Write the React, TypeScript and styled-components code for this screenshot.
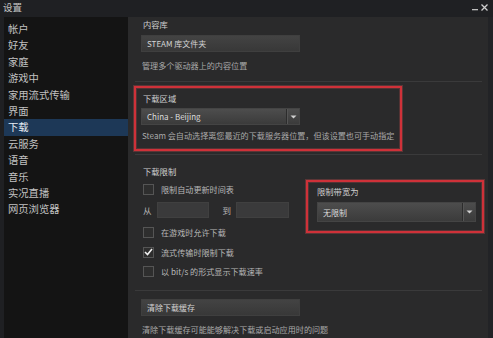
import styled, { createGlobalStyle } from "styled-components";

const GlobalStyle = createGlobalStyle`
  html, body {
    margin: 0;
    padding: 0;
    background: #1f2023;
  }
  * {
    box-sizing: border-box;
  }
`;

const Window = styled.div`
  width: 493px;
  height: 338px;
  background: #1f2023;
  font-family: "Noto Sans CJK SC", "Noto Sans", sans-serif;
  display: flex;
  flex-direction: column;
  overflow: hidden;
`;

const TitleBar = styled.div`
  height: 17px;
  display: flex;
  justify-content: space-between;
  align-items: flex-start;
  padding: 0 5px 0 3px;
  color: #c4c4c4;
  font-size: 9.5px;
  line-height: 14px;
`;

const WinControls = styled.div`
  display: flex;
  gap: 3px;
  align-items: center;
  height: 12px;
  margin-top: 1px;
`;

const Body = styled.div`
  flex: 1;
  display: flex;
  padding-left: 4px;
  min-height: 0;
`;

const Sidebar = styled.div`
  width: 124px;
  background: #141414;
  padding-top: 4px;
`;

const NavItem = styled.div<{ $active?: boolean }>`
  height: 16.4px;
  line-height: 16.4px;
  padding-left: 4px;
  font-size: 10.3px;
  color: ${({ $active }) => ($active ? "#e8eef4" : "#c2c2c2")};
  background: ${({ $active }) => ($active ? "#1d3857" : "transparent")};
`;

const Content = styled.div`
  flex: 1;
  background: #2a2a2b;
  padding: 1px 0 0 13px;
  display: flex;
  flex-direction: column;
  align-items: flex-start;
  border-right: 5px solid #222326;
`;

const Heading = styled.div`
  font-size: 8.3px;
  line-height: 12px;
  color: #cfcfcf;
  padding-left: 2px;
`;

const Desc = styled.div<{ $mt?: number }>`
  font-size: 8.1px;
  line-height: 12px;
  color: #a9a9a9;
  margin-top: ${({ $mt }) => $mt ?? 0}px;
  padding-left: 1px;
  white-space: nowrap;
`;

const Button = styled.div<{ $mt?: number }>`
  width: 159px;
  height: 17px;
  margin-top: ${({ $mt }) => $mt ?? 0}px;
  background: linear-gradient(#434343, #383838);
  border: 1px solid #3f3f3f;
  color: #d4d4d4;
  font-size: 8px;
  line-height: 15px;
  padding-left: 5px;
`;

const Separator = styled.div<{ $mt?: number }>`
  align-self: stretch;
  height: 1px;
  background: #3a3a3b;
  margin: ${({ $mt }) => $mt ?? 0}px 6px 0 -6px;
`;

const RedBox = styled.div<{ $mt?: number }>`
  border: 2px solid #cf3139;
  box-shadow: 0 0 0 1px rgba(210, 80, 80, 0.3), inset 0 0 0 1px rgba(210, 80, 80, 0.25);
  margin-top: ${({ $mt }) => $mt ?? 0}px;
  display: flex;
  flex-direction: column;
  align-items: flex-start;
`;

const RegionBox = styled(RedBox)`
  width: 268px;
  height: 65px;
  margin-left: -7px;
  padding: 4px 0 0 5px;
`;

const BandwidthBox = styled(RedBox)`
  width: 178px;
  height: 53px;
  padding: 3px 6px 0 9px;
`;

const Dropdown = styled.div<{ $w: number; $h: number; $mt: number }>`
  width: ${({ $w }) => $w}px;
  height: ${({ $h }) => $h}px;
  margin-top: ${({ $mt }) => $mt}px;
  background: linear-gradient(#4d4d4d, #3b3b3b);
  border: 1px solid #444;
  display: flex;
  align-items: stretch;
  color: #dcdcdc;
  font-size: 8px;
`;

const DropLabel = styled.div`
  flex: 1;
  display: flex;
  align-items: center;
  padding-left: 5px;
`;

const DropArrow = styled.div`
  width: 13px;
  border-left: 1px solid #2c2c2c;
  box-shadow: inset 1px 0 0 #555;
  display: flex;
  align-items: center;
  justify-content: center;
`;

const LimitRow = styled.div`
  display: flex;
  align-items: flex-start;
  margin-top: 3px;
`;

const LimitColumn = styled.div`
  width: 165px;
  display: flex;
  flex-direction: column;
  padding-top: 3px;
`;

const CheckRow = styled.div<{ $mt: number }>`
  display: flex;
  align-items: center;
  height: 12px;
  margin-top: ${({ $mt }) => $mt}px;
  padding-left: 2px;
  gap: 7px;
  font-size: 8.1px;
  color: #b8b8b8;
  white-space: nowrap;
`;

const Box = styled.div`
  width: 11px;
  height: 11px;
  border: 1px solid #555;
  background: #2e2e2e;
  display: flex;
  align-items: center;
  justify-content: center;
`;

const TimeRow = styled.div`
  display: flex;
  align-items: center;
  margin-top: 7px;
  height: 16px;
  padding-left: 2px;
  font-size: 8.5px;
  color: #b8b8b8;
`;

const TimeInput = styled.div<{ $ml: number; $w: number }>`
  width: ${({ $w }) => $w}px;
  height: 16px;
  margin-left: ${({ $ml }) => $ml}px;
  background: #3a3a3b;
  border: 1px solid #404040;
`;

const Arrow = () => (
  <svg width="7" height="4" viewBox="0 0 7 4">
    <path d="M0.5 0.5 L6.5 0.5 L3.5 3.5 Z" fill="#d0d0d0" />
  </svg>
);

const Check = ({ on }: { on?: boolean }) => (
  <Box>
    {on && (
      <svg width="9" height="8" viewBox="0 0 9 8">
        <path d="M1 4 L3.5 6.5 L8 1" stroke="#f0f0f0" strokeWidth="1.6" fill="none" />
      </svg>
    )}
  </Box>
);

const navItems = ["帐户", "好友", "家庭", "游戏中", "家用流式传输", "界面", "下载", "云服务", "语音", "音乐", "实况直播", "网页浏览器"];

export default function App() {
  return (
    <Window>
      <GlobalStyle />
      <TitleBar>
        <span>设置</span>
        <WinControls>
          <svg width="6" height="8" viewBox="0 0 6 8">
            <rect x="0" y="6" width="6" height="1.3" fill="#bdbdbd" />
          </svg>
          <svg width="7" height="7" viewBox="0 0 7 7">
            <path d="M0.5 0.5 L6.5 6.5 M6.5 0.5 L0.5 6.5" stroke="#cfcfcf" strokeWidth="1.3" />
          </svg>
        </WinControls>
      </TitleBar>
      <Body>
        <Sidebar>
          {navItems.map((n) => (
            <NavItem key={n} $active={n === "下载"}>
              {n}
            </NavItem>
          ))}
        </Sidebar>
        <Content>
          <Heading>内容库</Heading>
          <Button $mt={5}>STEAM 库文件夹</Button>
          <Desc $mt={8}>管理多个驱动器上的内容位置</Desc>
          <Separator $mt={9} />
          <RegionBox $mt={4}>
            <Heading>下载区域</Heading>
            <Dropdown $w={159} $h={17} $mt={4}>
              <DropLabel>China - Beijing</DropLabel>
              <DropArrow>
                <Arrow />
              </DropArrow>
            </Dropdown>
            <Desc $mt={5}>Steam 会自动选择离您最近的下载服务器位置，但该设置也可手动指定</Desc>
          </RegionBox>
          <Separator $mt={3} />
          <Heading style={{ marginTop: 10 }}>下载限制</Heading>
          <LimitRow>
            <LimitColumn>
              <CheckRow $mt={0}>
                <Check />
                限制自动更新时间表
              </CheckRow>
              <TimeRow>
                从
                <TimeInput $ml={5} $w={52} />
                <span style={{ marginLeft: 14 }}>到</span>
                <TimeInput $ml={5} $w={53} />
              </TimeRow>
              <CheckRow $mt={8}>
                <Check />
                在游戏时允许下载
              </CheckRow>
              <CheckRow $mt={8}>
                <Check on />
                流式传输时限制下载
              </CheckRow>
              <CheckRow $mt={7}>
                <Check />
                以 bit/s 的形式显示下载速率
              </CheckRow>
            </LimitColumn>
            <BandwidthBox>
              <Heading style={{ paddingLeft: 0 }}>限制带宽为</Heading>
              <Dropdown $w={159} $h={20} $mt={5}>
                <DropLabel>无限制</DropLabel>
                <DropArrow>
                  <Arrow />
                </DropArrow>
              </Dropdown>
            </BandwidthBox>
          </LimitRow>
          <Separator $mt={13} />
          <Button $mt={8}>清除下载缓存</Button>
          <Desc $mt={8}>清除下载缓存可能能够解决下载或启动应用时的问题</Desc>
        </Content>
      </Body>
    </Window>
  );
}
